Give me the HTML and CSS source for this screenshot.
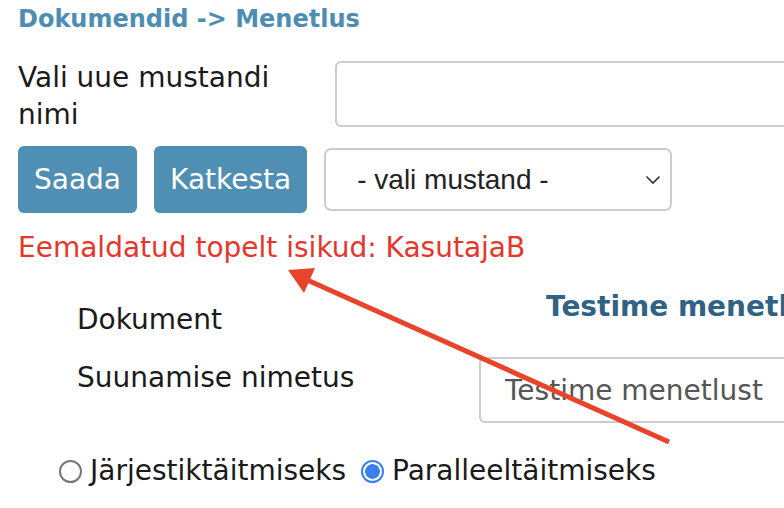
FILE: index.html
```html
<!DOCTYPE html>
<html lang="et">
<head>
<meta charset="UTF-8">
<meta name="viewport" content="width=device-width, initial-scale=1.0">
<title>Dokumendid -> Menetlus</title>
<link rel="stylesheet" href="styles.css">
</head>
<body>

<div class="page">
    <h1 class="title">Dokumendid -&gt; Menetlus</h1>

    <div class="name-row">
        <label for="draftName" class="name-label">Vali uue mustandi nimi</label>
        <input type="text" id="draftName" class="text-input name-input">
    </div>

    <div class="action-row">
        <button type="button" class="btn">Saada</button>
        <button type="button" class="btn">Katkesta</button>
        <div class="select-box">
            <span>- vali mustand -</span>
            <svg class="chevron" width="16" height="10" viewBox="0 0 16 10"><path d="M1.5 1.5 L8 8 L14.5 1.5" fill="none" stroke="#333" stroke-width="1.6"/></svg>
        </div>
    </div>

    <p class="error">Eemaldatud topelt isikud: KasutajaB</p>

    <div class="details">
        <div class="detail-row">
            <div class="detail-label">Dokument</div>
            <div class="doc-title">Testime menetlust</div>
        </div>
        <div class="detail-row route-row">
            <div class="detail-label">Suunamise nimetus</div>
            <input type="text" class="text-input route-input" value="Testime menetlust">
        </div>
    </div>

    <div class="radios">
        <label class="radio"><span class="dot"></span>Järjestiktäitmiseks</label>
        <label class="radio"><span class="dot checked"></span>Paralleeltäitmiseks</label>
    </div>
</div>

<svg class="arrow" width="784" height="508" viewBox="0 0 784 508">
    <line x1="669" y1="442" x2="305" y2="279" stroke="#e8432b" stroke-width="5"/>
    <polygon points="288,270 315,268 304,293" fill="#e8432b"/>
</svg>

</body>
</html>
```

FILE: styles.css
```css
body {
    margin: 0;
    font-family: "DejaVu Sans", Verdana, sans-serif;
    color: #1a1a1a;
    background-color: #fff;
    overflow: hidden;
    width: 784px;
    height: 508px;
}

.page {
    padding-left: 18px;
}

.title {
    margin: 0;
    padding-top: 4px;
    font-size: 24px;
    line-height: 30px;
    font-weight: bold;
    color: #4d8db4;
}

.name-row {
    display: flex;
    align-items: flex-start;
    margin-top: 25px;
}

.name-label {
    flex-shrink: 0;
    width: 317px;
    font-size: 28px;
    line-height: 37px;
}

.text-input {
    box-sizing: border-box;
    border: 2px solid #cccccc;
    border-radius: 6px;
    background: #fff;
    font-family: "DejaVu Sans", Verdana, sans-serif;
    font-size: 28px;
    outline: none;
}

.name-input {
    flex-shrink: 0;
    width: 520px;
    height: 66px;
    margin-top: 2px;
}

.action-row {
    display: flex;
    align-items: center;
    gap: 17px;
    margin-top: 13px;
}

.btn {
    height: 67px;
    padding: 0 16px;
    border: none;
    border-radius: 6px;
    background-color: #4f8fb3;
    color: #fff;
    font-family: "DejaVu Sans", Verdana, sans-serif;
    font-size: 28px;
}

.select-box {
    box-sizing: border-box;
    display: flex;
    align-items: center;
    justify-content: space-between;
    width: 348px;
    height: 63px;
    padding: 0 9px 0 31px;
    border: 2px solid #cccccc;
    border-radius: 7px;
    font-family: "Liberation Sans", Arial, sans-serif;
    font-size: 28px;
    color: #222;
}

.error {
    margin: 18px 0 0;
    font-size: 28px;
    line-height: 34px;
    color: #e8352a;
}

.details {
    margin: 38px 0 0 59px;
}

.detail-row {
    display: grid;
    grid-template-columns: 402px 1fr;
    align-items: start;
}

.route-row {
    margin-top: 20px;
}

.detail-label {
    font-size: 28px;
    line-height: 34px;
    white-space: nowrap;
}

.route-row .detail-label {
    margin-top: 4px;
}

.doc-title {
    margin-top: -13px;
    padding-left: 67px;
    font-size: 28px;
    line-height: 34px;
    font-weight: bold;
    color: #2f6386;
    white-space: nowrap;
}

.route-input {
    width: 400px;
    height: 66px;
    padding-left: 24px;
    color: #555;
}

.radios {
    display: flex;
    align-items: center;
    gap: 15px;
    margin: 31px 0 0 41px;
    font-size: 28px;
    line-height: 34px;
}

.radio {
    display: flex;
    align-items: center;
    gap: 8px;
}

.dot {
    box-sizing: border-box;
    width: 23px;
    height: 23px;
    border: 2px solid #777;
    border-radius: 50%;
}

.dot.checked {
    border: 2px solid #3b7ef0;
    background: radial-gradient(circle, #3b7ef0 0 7px, #fff 7.6px);
}

.arrow {
    position: absolute;
    left: 0;
    top: 0;
    pointer-events: none;
}
```
